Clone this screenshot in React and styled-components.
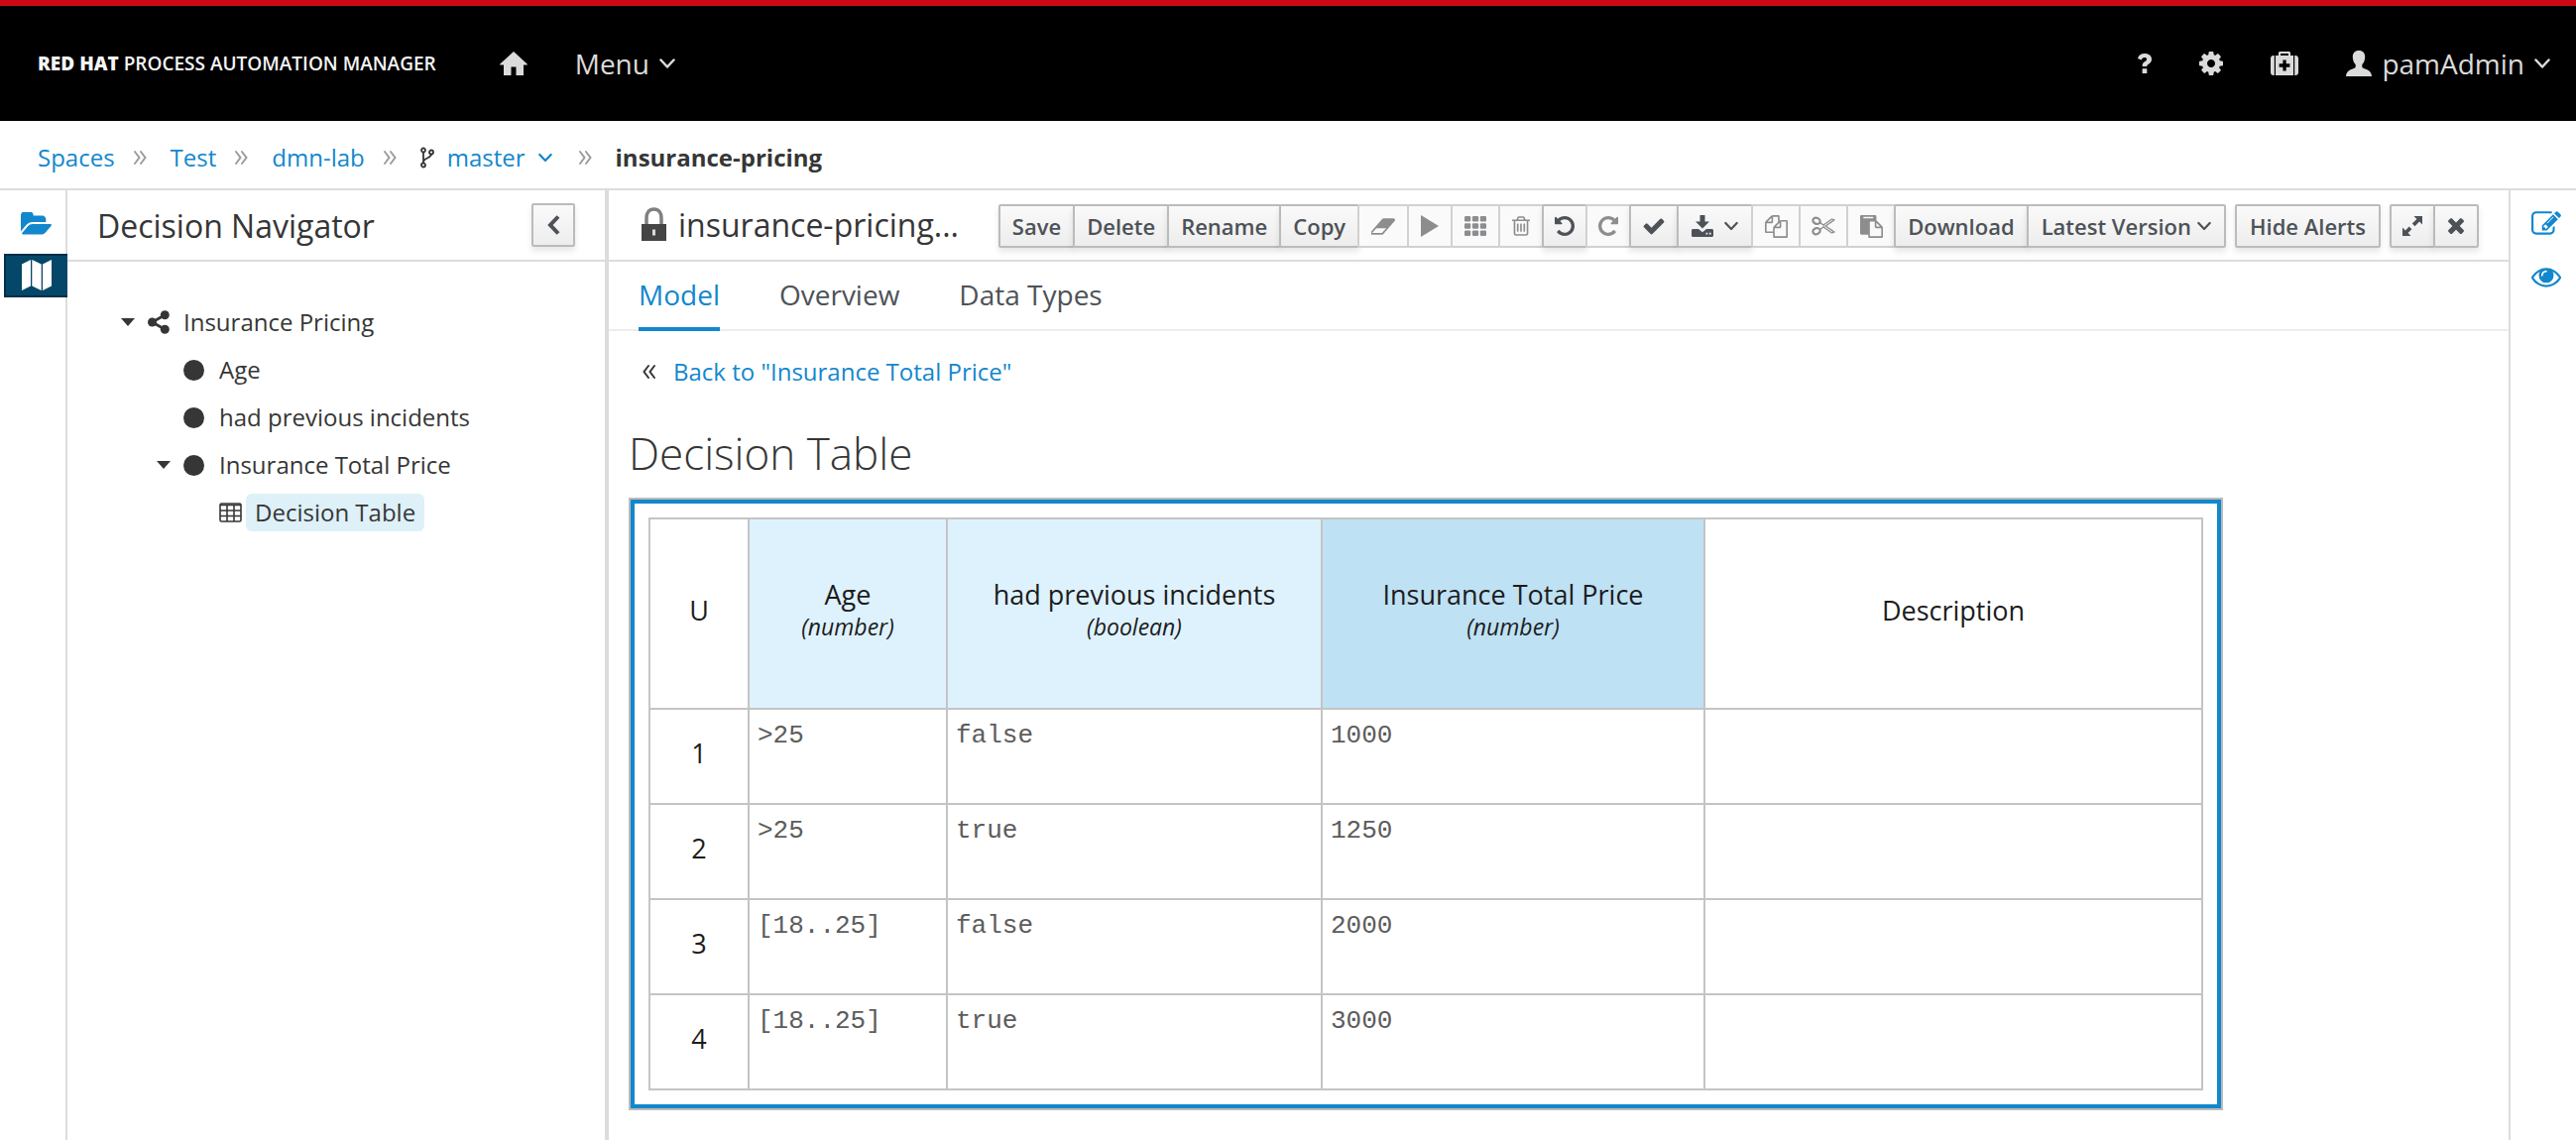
import React from "react";
import styled, { createGlobalStyle, css } from "styled-components";

const GlobalStyle = createGlobalStyle`
  *, *::before, *::after { box-sizing: border-box; }
  body {
    margin: 0;
    background: #fff;
    color: #363636;
    font-family: "Open Sans", "Noto Sans", sans-serif;
    font-size: 24px;
    line-height: 32px;
  }
  button { font-family: inherit; cursor: pointer; }
  a { text-decoration: none; }
  ul, ol { list-style: none; margin: 0; padding: 0; }
  h1, h2, h3 { margin: 0; font-weight: 400; }
  svg { display: block; flex: none; }
`;

const blue = "#1287cd";

/* ---------- icons ---------- */

const Glyph = ({ box = "0 0 1792 1792", w = 28, h = 28, d, children, flip }) => (
  <svg width={w} height={h} viewBox={box} fill="currentColor" aria-hidden="true">
    {d ? <path d={d} transform={flip ? "translate(1792 0) scale(-1 1)" : undefined} /> : children}
  </svg>
);

const paths = {
  cog: "M1152 896q0-106-75-181t-181-75-181 75-75 181 75 181 181 75 181-75 75-181zm512-109v222q0 12-8 23t-20 13l-185 28q-19 54-39 91 35 50 107 138 10 12 10 25t-9 23q-27 37-99 108t-94 71q-12 0-26-9l-138-108q-44 23-91 38-16 136-29 186-7 28-36 28h-222q-14 0-24.5-8.5t-11.5-21.5l-28-184q-49-16-90-37l-141 107q-10 9-25 9-14 0-25-11-126-114-165-168-7-10-7-23 0-12 8-23 15-21 51-66.5t54-70.5q-27-50-41-99l-183-27q-13-2-21-12.5t-8-23.5v-222q0-12 8-23t19-13l186-28q14-46 39-92-40-57-107-138-10-12-10-24 0-10 9-23 26-36 98.5-107.5t94.5-71.5q13 0 26 10l138 107q44-23 91-38 16-136 29-186 7-28 36-28h222q14 0 24.5 8.5t11.5 21.5l28 184q49 16 90 37l142-107q9-9 24-9 13 0 25 10 129 119 165 170 7 8 7 22 0 12-8 23-15 21-51 66.5t-54 70.5q26 50 41 98l183 28q13 2 21 12.5t8 23.5z",
  eye: "M1664 960q-152-236-381-353 61 104 61 225 0 185-131.5 316.5t-316.5 131.5-316.5-131.5-131.5-316.5q0-121 61-225-229 117-381 353 133 205 333.5 326.5t434.5 121.5 434.5-121.5 333.5-326.5zm-720-384q0-20-14-34t-34-14q-125 0-214.5 89.5t-89.5 214.5q0 20 14 34t34 14 34-14 14-34q0-86 61-147t147-61q20 0 34-14t14-34zm848 384q0 34-20 69-140 230-376.5 368.5t-499.5 138.5-499.5-139-376.5-368q-20-35-20-69t20-69q140-229 376.5-368t499.5-139 499.5 139 376.5 368q20 35 20 69z",
  edit: "M888 1184l116-116-152-152-116 116v56h96v96h56zm440-720q-16-16-33 1l-350 350q-17 17-1 33t33-1l350-350q17-17 1-33zm80 594v190q0 119-84.5 203.5t-203.5 84.5h-832q-119 0-203.5-84.5t-84.5-203.5v-832q0-119 84.5-203.5t203.5-84.5h832q63 0 117 25 15 7 18 23 3 17-9 29l-49 49q-14 14-32 8-23-6-45-6h-832q-66 0-113 47t-47 113v832q0 66 47 113t113 47h832q66 0 113-47t47-113v-126q0-13 9-22l64-64q15-15 35-7t20 29zm-96-738l288 288-672 672h-288v-288zm444 132l-92 92-288-288 92-92q28-28 68-28t68 28l152 152q28 28 28 68t-28 68z",
  undo: "M1664 896q0 156-61 298t-164 245-245 164-298 61q-172 0-327-72.5t-264-204.5q-7-10-6.5-22.5t8.5-20.5l137-138q10-9 25-9 16 2 23 12 73 95 179 147t225 52q104 0 198.5-40.5t163.5-109.5 109.5-163.5 40.5-198.5-40.5-198.5-109.5-163.5-163.5-109.5-198.5-40.5q-98 0-188 35.5t-160 101.5l137 138q31 30 14 69-17 40-59 40h-448q-26 0-45-19t-19-45v-448q0-42 40-59 39-17 69 14l130 129q107-101 244.5-156.5t284.5-55.5q156 0 298 61t245 164 164 245 61 298z",
  check: "M1671 566q0 40-28 68l-724 724-136 136q-28 28-68 28t-68-28l-136-136-362-362q-28-28-28-68t28-68l136-136q28-28 68-28t68 28l294 295 656-657q28-28 68-28t68 28l136 136q28 28 28 68z",
  times: "M1490 1322q0 40-28 68l-136 136q-28 28-68 28t-68-28l-294-294-294 294q-28 28-68 28t-68-28l-136-136q-28-28-28-68t28-68l294-294-294-294q-28-28-28-68t28-68l136-136q28-28 68-28t68 28l294 294 294-294q28-28 68-28t68 28l136 136q28 28 28 68t-28 68l-294 294 294 294q28 28 28 68z",
  folder: "M1879 952q0 31-31 66l-336 396q-43 51-120.5 86.5t-143.5 35.5h-1088q-34 0-60.5-13t-26.5-43q0-31 31-66l336-396q43-51 120.5-86.5t143.5-35.5h1088q34 0 60.5 13t26.5 43zm-343-344v160h-832q-94 0-197 47.5t-164 119.5l-337 396-5 6q0-4-.5-12.5t-.5-12.5v-960q0-92 66-158t158-66h320q92 0 158 66t66 158v32h544q92 0 158 66t66 158z",
  files: "M1696 384q40 0 68 28t28 68v1216q0 40-28 68t-68 28h-960q-40 0-68-28t-28-68v-288h-544q-40 0-68-28t-28-68v-672q0-40 20-88t48-76l408-408q28-28 76-48t88-20h416q40 0 68 28t28 68v328q68-40 128-40h416zm-544 213l-299 299h299v-299zm-640-384l-299 299h299v-299zm196 647l316-316v-416h-384v416q0 40-28 68t-68 28h-416v640h512v-256q0-40 20-88t48-76zm956 804v-1152h-384v416q0 40-28 68t-68 28h-416v640h896z",
  paste: "M768 1664h896v-640h-416q-40 0-68-28t-28-68v-416h-384v1152zm256-1440v-64q0-13-9.5-22.5t-22.5-9.5h-704q-13 0-22.5 9.5t-9.5 22.5v64q0 13 9.5 22.5t22.5 9.5h704q13 0 22.5-9.5t9.5-22.5zm256 672h299l-299-299v299zm512 128v672q0 40-28 68t-68 28h-960q-40 0-68-28t-28-68v-160h-544q-40 0-68-28t-28-68v-1344q0-40 28-68t68-28h1088q40 0 68 28t28 68v328q21 13 36 28l408 408q28 28 48 76t20 88z",
  eraser: "M832 1408l336-384h-768l-336 384h768zm1013-1077q15 34 9.5 71.5t-30.5 65.5l-896 1024q-38 44-96 44h-768q-38 0-69.5-20.5t-47.5-54.5q-15-34-9.5-71.5t30.5-65.5l896-1024q38-44 96-44h768q38 0 69.5 20.5t47.5 54.5z",
  trash: "M704 736v576q0 14-9 23t-23 9h-64q-14 0-23-9t-9-23v-576q0-14 9-23t23-9h64q14 0 23 9t9 23zm256 0v576q0 14-9 23t-23 9h-64q-14 0-23-9t-9-23v-576q0-14 9-23t23-9h64q14 0 23 9t9 23zm256 0v576q0 14-9 23t-23 9h-64q-14 0-23-9t-9-23v-576q0-14 9-23t23-9h64q14 0 23 9t9 23zm128 724v-948h-896v948q0 22 7 40.5t14.5 27 10.5 8.5h832q3 0 10.5-8.5t14.5-27 7-40.5zm-672-1076h448l-48-117q-7-9-17-11h-317q-10 2-17 11zm928 32v64q0 14-9 23t-23 9h-96v948q0 83-47 143.5t-113 60.5h-832q-66 0-113-58.5t-47-141.5v-952h-96q-14 0-23-9t-9-23v-64q0-14 9-23t23-9h309l70-167q15-37 54-63t79-26h320q40 0 79 26t54 63l70 167h309q14 0 23 9t9 23z",
};

const Chevron = ({ w = 16, thick = 2.5 }) => (
  <svg width={w} height={w} viewBox="0 0 16 16" fill="none" stroke="currentColor" strokeWidth={thick} strokeLinecap="round" strokeLinejoin="round" aria-hidden="true">
    <path d="M1.5 4.5 8 11.5l6.5-7" />
  </svg>
);

const DoubleAngle = ({ left }) => (
  <svg width="13" height="16" viewBox="0 0 13 16" fill="none" stroke="currentColor" strokeWidth="2" strokeLinecap="round" aria-hidden="true">
    <path d={left ? "M6 2 1.5 8 6 14M12 2 7.5 8 12 14" : "M1 2l4.5 6L1 14M7 2l4.5 6L7 14"} />
  </svg>
);

const HomeIcon = () => (
  <Glyph w={28} h={24} box="0 0 28 24">
    <path d="M14 0 27.600 12.500c.6.7.2 1.100-.6 1.100H24V24h-7.500v-8.500h-5V24H4V13.600H1c-.8 0-1.200-.4-.6-1.100z" />
  </Glyph>
);

const QuestionIcon = () => (
  <Glyph w={14} h={20} box="0 0 14 20">
    <path d="M0 5C.8 1.800 3.400 0 7 0c4.200 0 7 2.300 7 5.700 0 2.500-1.300 3.800-3.100 5-1.300.9-1.600 1.300-1.600 2.300H4.600c0-2.600.6-3.700 2.700-5 1.300-.8 1.800-1.300 1.800-2.200 0-1.100-.9-1.700-2.200-1.700-1.400 0-2.300.7-3.200 2.400zM4.600 15.200h4.700V20H4.600z" />
  </Glyph>
);

const KitIcon = () => (
  <Glyph w={28} h={24} box="0 0 28 24">
    <path fillRule="evenodd" d="M8 4V1.500C8 .6 8.600 0 9.500 0h9c.9 0 1.500.6 1.500 1.500V4h3v20H5V4zm2 0h8V2h-8zm2.400 4.500v3.800H8.600v3.400h3.800v3.800h3.300v-3.800h3.700v-3.400h-3.700V8.500zM3.800 4v20H3c-1.800 0-3-1.200-3-3V7c0-1.800 1.200-3 3-3zM24.200 4H25c1.800 0 3 1.200 3 3v14c0 1.800-1.200 3-3 3h-.8z" />
  </Glyph>
);

const UserIcon = () => (
  <Glyph w={26} h={26} box="0 0 26 26">
    <path d="M13 0c4 0 6.200 2.500 6.200 6.300 0 3.700-1.300 6.200-2.900 7.700v2.300c0 .9 1 1.500 3 2.300C23 20 25.600 21.500 26 26H0c.4-4.500 3-6 6.700-7.400 2-.8 3-1.400 3-2.300V14c-1.600-1.500-2.900-4-2.900-7.700C6.800 2.500 9 0 13 0z" />
  </Glyph>
);

const BranchIcon = () => (
  <svg width="14" height="22" viewBox="0 0 14 22" fill="none" stroke="#363636" strokeWidth="1.800" aria-hidden="true">
    <circle cx="3" cy="3.500" r="2" />
    <circle cx="3" cy="18.500" r="2" />
    <circle cx="11" cy="5.500" r="2" />
    <path d="M3 5.500v11M11 7.500c0 4.500-8 3.500-8 8" />
  </svg>
);

const MapIcon = () => (
  <Glyph w={30} h={32} box="0 0 30 32">
    <path d="M0 4.500 9 0v26.500L0 31zM10.300 0 19.700 4.500V31l-9.400-4.500zM21 4.500 30 0v26.500L21 31z" />
  </Glyph>
);

const LockIcon = () => (
  <svg width="25" height="34" viewBox="0 0 25 34" aria-hidden="true">
    <path d="M5 17v-6c0-5.500 2.800-9 7.500-9s7.500 3.500 7.500 9v6" fill="none" stroke="#808080" strokeWidth="3.500" />
    <path d="M0 17h25v17H0z" fill="#454545" />
    <path d="M11 22.500h3v6h-3z" fill="#ddd" />
  </svg>
);

const ShareIcon = () => (
  <svg width="22" height="24" viewBox="0 0 22 24" fill="currentColor" aria-hidden="true">
    <circle cx="4.500" cy="12" r="4.500" />
    <circle cx="17.300" cy="4.800" r="4.500" />
    <circle cx="17.300" cy="19.200" r="4.500" />
    <path d="M17.300 4.800 4.500 12l12.800 7.200" fill="none" stroke="currentColor" strokeWidth="2.800" />
  </svg>
);

const DotIcon = () => (
  <Glyph w={21} h={21} box="0 0 21 21"><circle cx="10.500" cy="10.500" r="10.500" /></Glyph>
);

const TableIcon = () => (
  <svg width="23" height="20" viewBox="0 0 23 20" fill="none" stroke="currentColor" strokeWidth="1.600" aria-hidden="true">
    <rect x="1" y="1" width="21" height="18" rx="1.500" />
    <path d="M1 2.500h21M1 8h21M1 13.500h21M8 2v17M15 2v17" />
  </svg>
);

const CaretIcon = () => (
  <Glyph w={14} h={8} box="0 0 14 8"><path d="M0 0h14L7 8z" /></Glyph>
);

const GridIcon = () => (
  <Glyph w={22} h={20} box="0 0 22 20">
    {[0, 1, 2].map((r) => [0, 1, 2].map((c) => (
      <rect key={`${r}${c}`} x={c * 7.900} y={r * 7.200} width="6.200" height="5.500" rx="1.200" />
    )))}
  </Glyph>
);

const PlayIcon = () => (
  <Glyph w={18} h={22} box="0 0 18 22"><path d="M0 0l18 11L0 22z" /></Glyph>
);

const ImportIcon = () => (
  <Glyph w={22} h={22} box="0 0 22 22">
    <path fillRule="evenodd" d="M8.500 0h5v6.500H18L11 13.500 4 6.500h4.500zM0 15.500C0 14.600.6 14 1.500 14H7l4 3.200L15 14h5.500c.9 0 1.500.6 1.500 1.500v5c0 .9-.6 1.500-1.500 1.500h-19C.6 22 0 21.400 0 20.500zM14.500 17.800v1.800h1.800v-1.800zm3.300 0v1.800h1.800v-1.800z" />
  </Glyph>
);

const CutIcon = () => (
  <svg width="24" height="20" viewBox="0 0 24 20" fill="none" stroke="currentColor" aria-hidden="true">
    <ellipse cx="5" cy="4.800" rx="3.700" ry="3" strokeWidth="2.200" transform="rotate(20 5 4.800)" />
    <ellipse cx="5" cy="15.200" rx="3.700" ry="3" strokeWidth="2.200" transform="rotate(-20 5 15.200)" />
    <path d="M8.300 6.400 12 9l8.500-6 2.500.9-8.800 6.100 8.800 6.100-2.500.9-8.500-6-3.700 2.600M12.500 10h.8" strokeWidth="1.300" strokeLinejoin="round" />
  </svg>
);

const ExpandIcon = () => (
  <Glyph w={20} h={20} box="0 0 20 20">
    <path d="M11.500 0H20v8.500l-2.900-2.900-4.600 4.600-2.700-2.700 4.600-4.600zM8.500 20H0v-8.500l2.900 2.900 3.800-3.800 2.700 2.700-3.800 3.800z" />
  </Glyph>
);

const BackChevron = () => (
  <svg width="14" height="20" viewBox="0 0 14 20" fill="none" stroke="currentColor" strokeWidth="4" aria-hidden="true">
    <path d="M12 1.500 4 10l8 8.500" />
  </svg>
);

/* ---------- layout ---------- */

const Page = styled.div`
  display: flex;
  flex-direction: column;
  min-height: 100vh;
`;

const Masthead = styled.header`
  display: flex;
  align-items: center;
  height: 122px;
  padding: 0 26px 0 38px;
  border-top: 6px solid #cc0814;
  background: #000;
  color: #dbdbdb;
`;

const Brand = styled.a`
  color: #f5f5f5;
  font-size: 19px;
  font-weight: 600;
  white-space: nowrap;
  strong { font-weight: 800; }
`;

const MastNav = styled.nav`
  display: flex;
  align-items: center;
  gap: 48px;
  margin-left: 64px;
`;

const MastTools = styled.div`
  display: flex;
  align-items: center;
  gap: 48px;
  margin-left: auto;
`;

const MastButton = styled.button`
  display: flex;
  align-items: center;
  gap: 10px;
  padding: 0;
  border: 0;
  background: none;
  color: inherit;
  font-size: 28px;
  line-height: 32px;
`;

const Crumbs = styled.ol`
  display: flex;
  align-items: center;
  height: 70px;
  padding: 6px 38px 0;
  border-bottom: 2px solid #dcdcdc;
`;

const Crumb = styled.li`
  display: flex;
  align-items: center;
  font-weight: ${(p) => (p.$current ? 700 : 400)};
  a { display: flex; align-items: center; gap: 13px; color: ${blue}; }
  > svg:last-child { margin: 0 24px 0 ${(p) => (p.$menu ? 27 : 19)}px; color: #9c9c9c; }
`;

const Body = styled.div`
  flex: 1;
  display: grid;
  grid-template-columns: 68px 546px minmax(0, 1fr) 68px;
`;

const Rail = styled.nav`
  display: flex;
  flex-direction: column;
  border: solid #dcdcdc;
  border-width: ${(p) => (p.$side === "left" ? "0 2px 0 0" : "0 0 0 2px")};
`;

const RailButton = styled.button`
  display: flex;
  align-items: center;
  justify-content: center;
  height: 44px;
  margin-top: ${(p) => p.$top || 12}px;
  padding: 0 0 0 6px;
  border: 0;
  background: none;
  color: ${blue};
  ${(p) => p.$active && css`
    margin-left: 4px;
    margin-right: -2px;
    padding: 0;
    border: 2px solid #002f4a;
    border-right: 0;
    background: #054769;
    color: #fff;
  `}
`;

const Panel = styled.aside`
  border-right: 4px solid #dcdcdc;
`;

const Bar = styled.div`
  display: flex;
  align-items: center;
  justify-content: space-between;
  height: 72px;
  padding: 0 30px;
  border-bottom: 2px solid #dcdcdc;
`;

const Title = styled.h1`
  padding-top: 2px;
  font-size: 32px;
  line-height: 40px;
  white-space: nowrap;
`;

const DocTitle = styled.div`
  display: flex;
  align-items: center;
  gap: 12px;
  padding: 0 0 2px 3px;
`;

const Tree = styled.ul`
  padding: ${(p) => (p.$root ? 37 : 0)}px 0 0 ${(p) => (p.$root ? 54 : 36)}px;
`;

const TreeRow = styled.div`
  display: grid;
  grid-template-columns: 27px 27px auto;
  align-items: center;
  justify-content: start;
  height: 48px;
`;

const Slot = styled.span`
  grid-column: ${(p) => p.$col};
`;

const NodeLabel = styled.a`
  grid-column: 3;
  padding: 3px 9px;
  border-radius: 6px;
  background: ${(p) => (p.$selected ? "#def0f8" : "transparent")};
  color: #363636;
`;

const Tools = styled.div`
  display: flex;
  gap: 9px;
  padding-top: 2px;
`;

const Group = styled.div`
  display: flex;
  button + button { margin-left: -2px; }
`;

const Button = styled.button`
  display: flex;
  align-items: center;
  justify-content: center;
  gap: ${(p) => p.$gap || 6}px;
  width: ${(p) => (p.$w ? `${p.$w}px` : "auto")};
  height: 44px;
  padding: 0 ${(p) => (p.$w ? 0 : p.$tight ? 12 : 13)}px;
  border: 2px solid #bbb;
  border-radius: 2px;
  background: linear-gradient(#fafafa, #ededed);
  box-shadow: 0 4px 6px rgba(3, 3, 3, 0.1);
  color: #4d5258;
  font-size: 22px;
  font-weight: 600;
  line-height: 32px;
  white-space: nowrap;
  &:disabled {
    border-color: #d1d1d1;
    background: #fafafa;
    box-shadow: none;
    color: #8b8d8f;
  }
`;

const Tabs = styled.div`
  display: flex;
  gap: 60px;
  height: 70px;
  padding: 0 30px;
  box-shadow: inset 0 -2px #ededed;
`;

const Tab = styled.button`
  padding: 0;
  border: 0;
  border-bottom: 4px solid ${(p) => (p.$active ? blue : "transparent")};
  background: none;
  color: ${(p) => (p.$active ? blue : "#4d5258")};
  font-size: 28px;
  line-height: 32px;
`;

const Content = styled.section`
  padding: 25px 20px 30px;
`;

const BackLink = styled.a`
  display: flex;
  align-items: center;
  gap: 18px;
  padding-left: 14px;
  color: ${blue};
  svg { color: #363636; }
`;

const Heading = styled.h2`
  margin: 36px 0 17px;
  font-size: 44px;
  font-weight: 300;
  line-height: 60px;
`;

const Frame = styled.div`
  width: fit-content;
  margin: 0 2px;
  padding: 14px;
  border: 4px solid ${blue};
  outline: 2px solid #bbb;
`;

const Grid = styled.table`
  border-collapse: collapse;
  table-layout: fixed;
  width: 1568px;
`;

const Col = styled.col`
  width: ${(p) => p.$w}px;
`;

const cell = css`
  padding: 0 0 6px;
  border: 2px solid #c4c4c4;
  color: #1c1c1c;
  font-size: 27px;
  font-weight: 500;
  line-height: 32px;
`;

const HeadCell = styled.th`
  ${cell}
  height: 192px;
  background: ${(p) => p.$fill || "#fff"};
  small {
    display: block;
    font-size: 23px;
    font-style: italic;
  }
`;

const NumberCell = styled.th`
  ${cell}
  height: 96px;
`;

const ValueCell = styled.td`
  ${cell}
  padding: 10px 8px;
  color: #5c5c5c;
  font-family: "Liberation Mono", monospace;
  font-size: 26px;
  font-weight: 400;
  vertical-align: top;
`;

const columns = [
  { name: "U", w: 100 },
  { name: "Age", type: "(number)", w: 200, fill: "#def2fe" },
  { name: "had previous incidents", type: "(boolean)", w: 378, fill: "#def2fe" },
  { name: "Insurance Total Price", type: "(number)", w: 386, fill: "#bfe1f4" },
  { name: "Description", w: 502 },
];

const rules = [
  [">25", "false", "1000", ""],
  [">25", "true", "1250", ""],
  ["[18..25]", "false", "2000", ""],
  ["[18..25]", "true", "3000", ""],
];

const Node = ({ icon, label, open, selected, children }) => (
  <li role="treeitem" aria-expanded={open} aria-selected={!!selected}>
    <TreeRow>
      {open && <Slot $col={1}><CaretIcon /></Slot>}
      <Slot $col={2}>{icon}</Slot>
      <NodeLabel href="#" $selected={selected}>{label}</NodeLabel>
    </TreeRow>
    {children && <Tree role="group">{children}</Tree>}
  </li>
);

export default function App() {
  return (
    <Page>
      <GlobalStyle />
      <Masthead>
        <Brand href="#"><strong>RED HAT</strong> PROCESS AUTOMATION MANAGER</Brand>
        <MastNav>
          <MastButton aria-label="Home"><HomeIcon /></MastButton>
          <MastButton>Menu <Chevron /></MastButton>
        </MastNav>
        <MastTools>
          <MastButton aria-label="Help"><QuestionIcon /></MastButton>
          <MastButton aria-label="Settings"><Glyph box="128 128 1536 1536" w={24} h={24} d={paths.cog} /></MastButton>
          <MastButton aria-label="Support"><KitIcon /></MastButton>
          <MastButton><UserIcon /> pamAdmin <Chevron /></MastButton>
        </MastTools>
      </Masthead>

      <Crumbs>
        <Crumb><a href="#">Spaces</a><DoubleAngle /></Crumb>
        <Crumb><a href="#">Test</a><DoubleAngle /></Crumb>
        <Crumb><a href="#">dmn-lab</a><DoubleAngle /></Crumb>
        <Crumb $menu><a href="#"><BranchIcon />master <Chevron w={14} /></a><DoubleAngle /></Crumb>
        <Crumb $current>insurance-pricing</Crumb>
      </Crumbs>

      <Body>
        <Rail $side="left">
          <RailButton aria-label="Project files"><Glyph w={31} h={24} box="0 256 1879 1280" d={paths.folder} /></RailButton>
          <RailButton aria-label="Decision Navigator" $active $top={8}><MapIcon /></RailButton>
        </Rail>

        <Panel>
          <Bar>
            <Title as="h2">Decision Navigator</Title>
            <Button $w={44} aria-label="Collapse"><BackChevron /></Button>
          </Bar>
          <Tree $root role="tree">
            <Node icon={<ShareIcon />} label="Insurance Pricing" open>
              <Node icon={<DotIcon />} label="Age" />
              <Node icon={<DotIcon />} label="had previous incidents" />
              <Node icon={<DotIcon />} label="Insurance Total Price" open>
                <Node icon={<TableIcon />} label="Decision Table" selected />
              </Node>
            </Node>
          </Tree>
        </Panel>

        <main>
          <Bar>
            <DocTitle><LockIcon /><Title>insurance-pricing...</Title></DocTitle>
            <Tools>
              <Group>
                <Button $tight>Save</Button>
                <Button $tight>Delete</Button>
                <Button $tight>Rename</Button>
                <Button $tight>Copy</Button>
                <Button disabled $w={52} aria-label="Clear"><Glyph w={24} h={19} box="0 256 1860 1280" d={paths.eraser} /></Button>
                <Button disabled $w={46} aria-label="Run"><PlayIcon /></Button>
                <Button disabled $w={50} aria-label="Grid"><GridIcon /></Button>
                <Button disabled $w={46} aria-label="Remove"><Glyph w={18} h={22} box="192 128 1408 1536" d={paths.trash} /></Button>
                <Button $w={46} aria-label="Undo"><Glyph w={20} h={20} box="128 128 1536 1536" d={paths.undo} /></Button>
                <Button disabled $w={46} aria-label="Redo"><Glyph w={20} h={20} box="128 128 1536 1536" d={paths.undo} flip /></Button>
                <Button $w={50} aria-label="Validate"><Glyph w={24} h={24} d={paths.check} /></Button>
                <Button $w={77} $gap={11} aria-label="Export"><ImportIcon /><Chevron w={14} /></Button>
                <Button disabled $w={50} aria-label="Copy selection"><Glyph w={23} h={23} d={paths.files} /></Button>
                <Button disabled $w={50} aria-label="Cut selection"><CutIcon /></Button>
                <Button disabled $w={50} aria-label="Paste selection"><Glyph w={23} h={23} d={paths.paste} /></Button>
                <Button $tight>Download</Button>
                <Button aria-haspopup="menu">Latest Version <Chevron w={14} /></Button>
              </Group>
              <Button>Hide Alerts</Button>
              <Group>
                <Button $w={46} aria-label="Expand"><ExpandIcon /></Button>
                <Button $w={46} aria-label="Close"><Glyph w={16} h={16} box="300 360 1190 1190" d={paths.times} /></Button>
              </Group>
            </Tools>
          </Bar>

          <Tabs role="tablist">
            <Tab role="tab" aria-selected="true" $active>Model</Tab>
            <Tab role="tab">Overview</Tab>
            <Tab role="tab">Data Types</Tab>
          </Tabs>

          <Content>
            <BackLink href="#"><DoubleAngle left />Back to "Insurance Total Price"</BackLink>
            <Heading>Decision Table</Heading>
            <Frame>
              <Grid>
                <colgroup>
                  {columns.map((c) => <Col key={c.name} $w={c.w} />)}
                </colgroup>
                <thead>
                  <tr>
                    {columns.map((c) => (
                      <HeadCell key={c.name} scope="col" $fill={c.fill}>
                        {c.name}
                        {c.type && <small>{c.type}</small>}
                      </HeadCell>
                    ))}
                  </tr>
                </thead>
                <tbody>
                  {rules.map((r, i) => (
                    <tr key={i}>
                      <NumberCell scope="row">{i + 1}</NumberCell>
                      {r.map((v, j) => <ValueCell key={j}>{v}</ValueCell>)}
                    </tr>
                  ))}
                </tbody>
              </Grid>
            </Frame>
          </Content>
        </main>

        <Rail $side="right">
          <RailButton aria-label="Properties"><Glyph w={30} h={26} box="0 128 1792 1536" d={paths.edit} /></RailButton>
          <RailButton aria-label="Preview" $top={10}><Glyph w={30} h={20} box="0 384 1792 1152" d={paths.eye} /></RailButton>
        </Rail>
      </Body>
    </Page>
  );
}
